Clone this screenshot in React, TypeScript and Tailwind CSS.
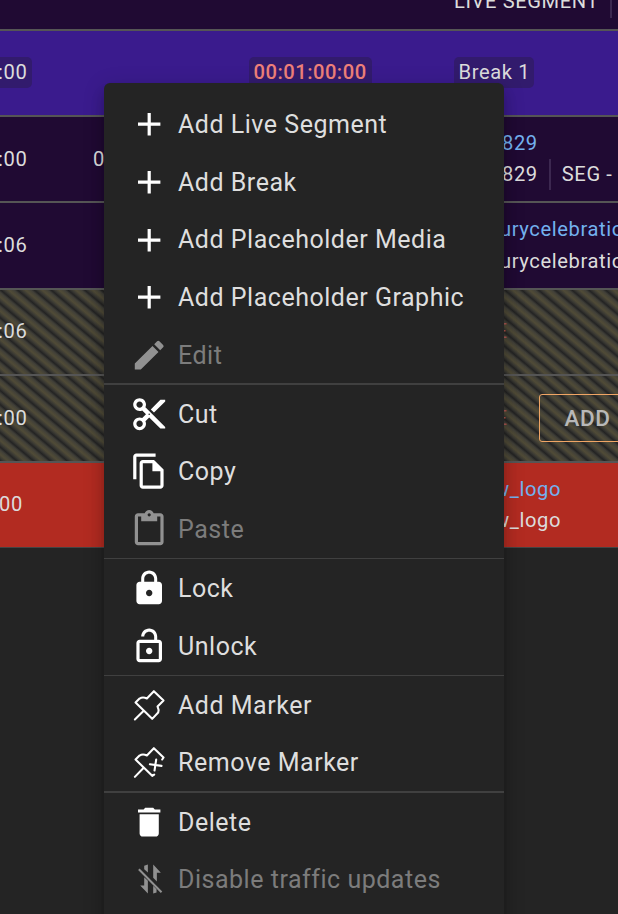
import type { ReactNode } from "react";
import {
  MdAdd,
  MdContentCut,
  MdContentPaste,
  MdDelete,
  MdEdit,
  MdLock,
  MdLockOpen,
  MdOutlineFileCopy,
} from "react-icons/md";

const STRIPES =
  "bg-[repeating-linear-gradient(40deg,#232323_0px,#3a3933_2.4px,#504b37_5px,#4b4737_6.5px,#403f38_8.6px,#232323_10.8px)]";

function PinIcon() {
  return (
    <svg viewBox="89.4 392.4 115.2 115.2" className="size-full" fill="none" stroke="currentColor" strokeWidth="6.2" strokeLinejoin="round" strokeLinecap="round">
      <path d="M161 408 190 436 172 454Q177 464 174 472L156 491 106 442 118 430Q128 424 140 430ZM129 468 104 493" />
    </svg>
  );
}

function PinRemoveIcon() {
  return (
    <svg viewBox="89.4 563.4 115.2 115.2" className="size-full" fill="none" stroke="currentColor" strokeWidth="6.2" strokeLinejoin="round" strokeLinecap="round">
      <path d="M186 613 190 607 161 579 140 601Q128 595 118 601L106 613 156 662 162 658M129 639 104 665M149 627 184 632M168 613 163 646" />
    </svg>
  );
}

function TrafficOffIcon() {
  return (
    <svg viewBox="89.4 239.4 115.2 115.2" className="size-full" fill="currentColor">
      <path d="M132 257 143 253V277L132 267ZM132 291 143 302V340L120 316H132ZM159 253 182 278H170V304L159 293ZM159 317 169 327V337L159 340Z" />
      <path d="M116 267 184 336" stroke="currentColor" strokeWidth="6" />
    </svg>
  );
}

function Item({ icon, label, disabled = false }: { icon: ReactNode; label: string; disabled?: boolean }) {
  return (
    <li className={`flex flex-1 items-center pl-[26px] ${disabled ? "text-[#7c7c7c]" : "text-[#dedede]"}`}>
      <span className={`mr-[9.6px] size-[38.4px] shrink-0 ${disabled ? "text-[#919191]" : "text-white"}`}>{icon}</span>
      <span className="whitespace-nowrap pt-[2px] text-[25px] leading-8 tracking-[0.52px]">{label}</span>
    </li>
  );
}

function Chip({ children, className }: { children: ReactNode; className: string }) {
  return (
    <span className={`flex h-[31px] shrink-0 items-center whitespace-nowrap rounded-[5px] bg-[#321b6d] ${className}`}>{children}</span>
  );
}

function TwoLine({ text, extra, className = "" }: { text: string; extra?: string; className?: string }) {
  return (
    <div className={`flex shrink-0 flex-col whitespace-nowrap leading-[31px] ${className}`}>
      <span className="text-[#73b1ef]">{text}</span>
      <span className="flex">
        {text}
        {extra && <span className="ml-[11px] border-l-2 border-[#3c2850] pl-[11px]">{extra}</span>}
      </span>
    </div>
  );
}

const icon = "size-full";

export default function App() {
  return (
    <div className="relative h-[914px] w-[618px] overflow-hidden bg-[#242424] font-[Roboto,sans-serif] text-[20.16px] tracking-[0.6px] text-[#dcdcdc]">
      <div className="flex flex-col">
        <div className="flex h-[31px] items-start border-b-2 border-[#555] bg-[#200a33]">
          <span className="-mt-[14px] ml-[454px] w-[156px] shrink-0 whitespace-nowrap leading-[31px]">LIVE SEGMENT</span>
          <span className="-mt-[14px] h-[32px] w-[2px] bg-[#3c2850]" />
        </div>
        <div className="flex h-[86px] items-center border-b-2 border-[#555] bg-[#3a1b8d] pb-[2px]">
          <Chip className="-ml-[7px] w-[39px] pl-[5px]">:00</Chip>
          <Chip className="ml-[217px] w-[123px] pl-[4.5px] font-medium tracking-[0.5px] text-[#ee8079]">00:01:00:00</Chip>
          <Chip className="ml-[82px] w-[80px] pl-[4.5px]">Break 1</Chip>
        </div>
        <div className="flex h-[86px] items-center border-b-2 border-[#555] bg-[#200a33]">
          <span className="-ml-[2px] w-[95px] shrink-0">:00</span>
          <span className="w-[409px] shrink-0">00:01:00</span>
          <TwoLine text="829" extra="SEG - " />
        </div>
        <div className="flex h-[87px] items-center border-b-2 border-[#555] bg-[#200a33]">
          <span className="-ml-[2px] w-[502px] shrink-0 pb-px">:06</span>
          <TwoLine text="urycelebration" className="gap-px" />
        </div>
        <div className={`flex h-[86px] items-center border-b-2 border-[#555] pb-[2px] ${STRIPES}`}>
          <span className="-ml-[2px] w-[497.5px] shrink-0">:06</span>
          <span className="text-[#a85856]">E</span>
        </div>
        <div className={`flex h-[87px] items-center border-b-2 border-[#555] ${STRIPES}`}>
          <span className="-ml-[2px] w-[497.5px] shrink-0">:00</span>
          <span className="w-[43.5px] shrink-0 text-[#a85856]">E</span>
          <button className="-mt-px h-[48px] w-[130px] shrink-0 rounded-[3px] border border-[#f0a565] pl-[24.5px] pt-[2px] text-left text-[22.5px] font-medium tracking-[0.6px] text-[#b8b8b8]">
            ADD
          </button>
        </div>
        <div className="flex h-[85px] items-center border-b border-[#444] bg-[#b22b21] pb-px">
          <span className="-ml-px w-[495px] shrink-0">00</span>
          <TwoLine text="w_logo" />
        </div>
      </div>

      {/* Context menu floating over the rundown */}
      <div className="absolute left-[104px] top-[83px] h-[860px] w-[400px] rounded-[6px] bg-[#242424] pt-[12.5px] shadow-[0_7px_7px_-4px_rgba(0,0,0,0.2),0_12px_14px_1px_rgba(0,0,0,0.14),0_4px_20px_3px_rgba(0,0,0,0.12)]">
        <ul className="-mb-px flex h-[288.5px] flex-col [&>li>span:last-child]:pt-px">
          <Item icon={<MdAdd className={icon} />} label="Add Live Segment" />
          <Item icon={<MdAdd className={icon} />} label="Add Break" />
          <Item icon={<MdAdd className={icon} />} label="Add Placeholder Media" />
          <Item icon={<MdAdd className={icon} />} label="Add Placeholder Graphic" />
          <Item icon={<MdEdit className={icon} />} label="Edit" disabled />
        </ul>
        <ul className="flex h-[175px] flex-col border-t-2 border-[#404040] pb-[0.4px]">
          <Item icon={<MdContentCut className={icon} />} label="Cut" />
          <Item icon={<MdOutlineFileCopy className={icon} />} label="Copy" />
          <Item icon={<MdContentPaste className={icon} />} label="Paste" disabled />
        </ul>
        <ul className="flex h-[117px] flex-col border-t border-[#404040]">
          <Item icon={<MdLock className={icon} />} label="Lock" />
          <Item icon={<MdLockOpen className={icon} />} label="Unlock" />
        </ul>
        <ul className="flex h-[116px] flex-col border-t border-[#404040]">
          <Item icon={<PinIcon />} label="Add Marker" />
          <Item icon={<PinRemoveIcon />} label="Remove Marker" />
        </ul>
        <ul className="flex h-[117px] flex-col border-t-2 border-[#404040]">
          <Item icon={<MdDelete className={icon} />} label="Delete" />
          <Item icon={<TrafficOffIcon />} label="Disable traffic updates" disabled />
        </ul>
      </div>
    </div>
  );
}
